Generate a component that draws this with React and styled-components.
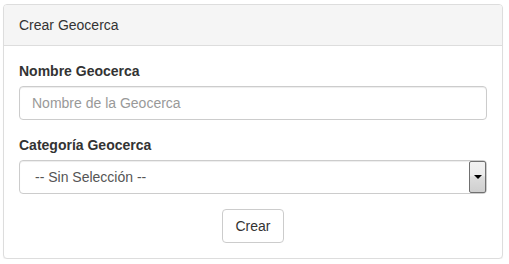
import React from 'react';
import styled, { createGlobalStyle } from 'styled-components';

const GlobalStyle = createGlobalStyle`
  body {
    margin: 0;
    background: #fff;
    font-family: "Liberation Sans", Arial, sans-serif;
    font-size: 14px;
    line-height: 20px;
    color: #333;
  }
`;

const Page = styled.div`
  padding: 4px 6px 0 3px;
`;

const Panel = styled.div`
  width: 500px;
  box-sizing: border-box;
  border: 1px solid #ddd;
  border-radius: 4px;
  background: #fff;
  box-shadow: 0 1px 1px rgba(0, 0, 0, 0.05);
`;

const Heading = styled.div`
  padding: 10px 15px;
  background: #f5f5f5;
  border-bottom: 1px solid #ddd;
  border-radius: 3px 3px 0 0;
  color: #333;
`;

const Body = styled.div`
  padding: 15px;
  display: flex;
  flex-direction: column;
  gap: 15px;
`;

const Group = styled.div`
  display: flex;
  flex-direction: column;
  gap: 5px;
`;

const Label = styled.label`
  font-weight: bold;
`;

const Input = styled.input`
  height: 34px;
  box-sizing: border-box;
  padding: 6px 12px;
  border: 1px solid #ccc;
  border-radius: 4px;
  font: inherit;
  color: #555;
  box-shadow: inset 0 1px 1px rgba(0, 0, 0, 0.075);
  outline: none;

  &::placeholder {
    color: #999;
  }
`;

const Select = styled.div`
  height: 34px;
  box-sizing: border-box;
  border: 1px solid #ccc;
  border-radius: 4px;
  display: flex;
  align-items: stretch;
  color: #555;
  box-shadow: inset 0 1px 1px rgba(0, 0, 0, 0.075);
`;

const SelectValue = styled.span`
  flex: 1;
  padding: 6px 15px;
`;

const ArrowButton = styled.span`
  width: 17px;
  box-sizing: border-box;
  border: 1px solid #707070;
  border-radius: 2px;
  background: linear-gradient(#f2f2f2, #ebebeb 45%, #dddddd 50%, #cfcfcf);
  display: flex;
  align-items: center;
  justify-content: center;
`;

const Triangle = styled.span`
  width: 0;
  height: 0;
  border-left: 4px solid transparent;
  border-right: 4px solid transparent;
  border-top: 4px solid #000;
`;

const Actions = styled.div`
  display: flex;
  justify-content: center;
`;

const Button = styled.button`
  height: 34px;
  padding: 6px 12px;
  border: 1px solid #ccc;
  border-radius: 4px;
  background: #fff;
  font: inherit;
  color: #333;
`;

export default function App() {
  return (
    <Page>
      <GlobalStyle />
      <Panel>
        <Heading>Crear Geocerca</Heading>
        <Body>
          <Group>
            <Label>Nombre Geocerca</Label>
            <Input placeholder="Nombre de la Geocerca" />
          </Group>
          <Group>
            <Label>Categoría Geocerca</Label>
            <Select>
              <SelectValue>-- Sin Selección --</SelectValue>
              <ArrowButton>
                <Triangle />
              </ArrowButton>
            </Select>
          </Group>
          <Actions>
            <Button>Crear</Button>
          </Actions>
        </Body>
      </Panel>
    </Page>
  );
}
